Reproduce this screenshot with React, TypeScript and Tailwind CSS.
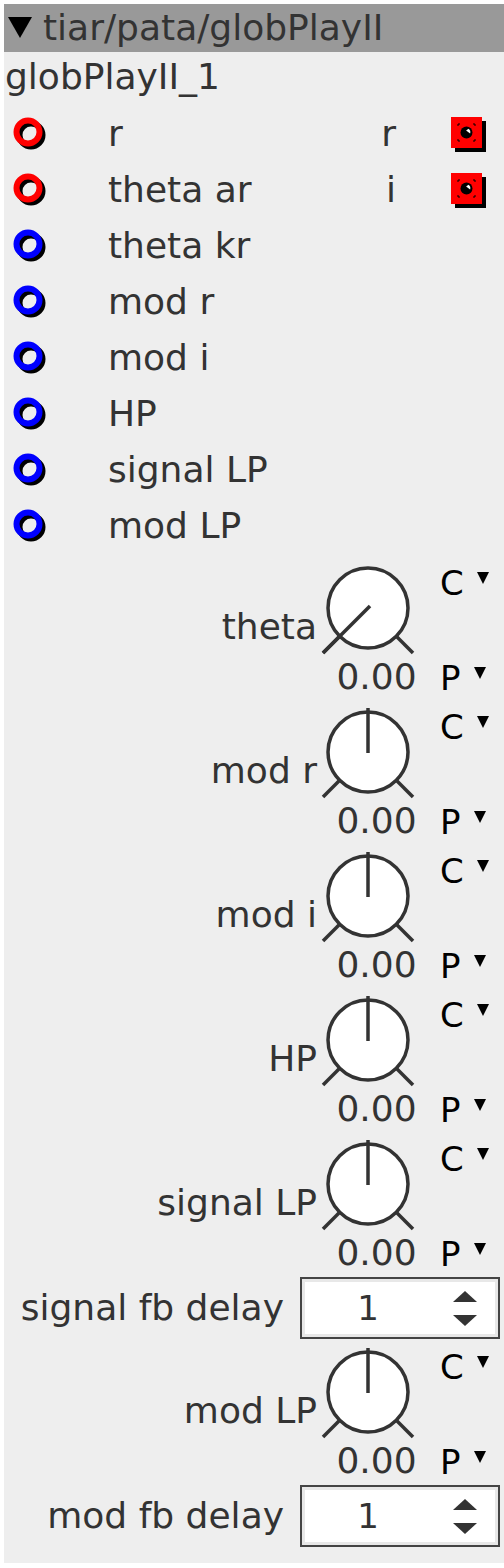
import React from 'react';

const inlets = [
  { label: 'r', color: '#ff0000' },
  { label: 'theta ar', color: '#ff0000' },
  { label: 'theta kr', color: '#0000ff' },
  { label: 'mod r', color: '#0000ff' },
  { label: 'mod i', color: '#0000ff' },
  { label: 'HP', color: '#0000ff' },
  { label: 'signal LP', color: '#0000ff' },
  { label: 'mod LP', color: '#0000ff' },
];

const outlets: Record<number, string> = { 0: 'r', 1: 'i' };

type Item =
  | { kind: 'knob'; label: string; min?: boolean }
  | { kind: 'num'; label: string };

const items: Item[] = [
  { kind: 'knob', label: 'theta', min: true },
  { kind: 'knob', label: 'mod r' },
  { kind: 'knob', label: 'mod i' },
  { kind: 'knob', label: 'HP' },
  { kind: 'knob', label: 'signal LP' },
  { kind: 'num', label: 'signal fb delay' },
  { kind: 'knob', label: 'mod LP' },
  { kind: 'num', label: 'mod fb delay' },
];

const Ring: React.FC<{ color: string }> = ({ color }) => (
  <svg width="40" height="40" viewBox="0 0 40 40">
    <circle cx="19" cy="19" r="11.5" fill="none" stroke="#000" strokeWidth="6" />
    <circle cx="16" cy="16" r="11.5" fill="none" stroke={color} strokeWidth="6" />
  </svg>
);

const OutPort: React.FC = () => (
  <svg width="40" height="40" viewBox="0 0 40 40">
    <rect x="4" y="4" width="31" height="31" fill="#000" />
    <rect x="0" y="0" width="31" height="31" fill="#ff0000" />
    <path d="M7 9V7h2M22 7h2v2M24 22v2h-2M9 24H7v-2" fill="none" stroke="#000" strokeWidth="1" />
    <circle cx="15.5" cy="15.5" r="6" fill="#000" />
    <path d="M17.5 11.8a4 4 0 0 1 1.6 4.6l-4 -3z" fill="#fff" />
  </svg>
);

const Caret: React.FC<{ size?: number }> = ({ size = 12 }) => (
  <svg width={size} height={size} viewBox="0 0 12 12">
    <polygon points="0,0 12,0 6,12" fill="#000" />
  </svg>
);

const Knob: React.FC<{ min?: boolean }> = ({ min }) => (
  <svg width="96" height="96" viewBox="0 0 96 96">
    <circle cx="48" cy="48" r="40" fill="#fff" stroke="#333" strokeWidth="3.5" />
    <line x1="19.7" y1="76.3" x2="3" y2="93" stroke="#333" strokeWidth="3.5" />
    <line x1="76.3" y1="76.3" x2="93" y2="93" stroke="#333" strokeWidth="3.5" />
    {min ? (
      <line x1="50" y1="46" x2="3" y2="93" stroke="#333" strokeWidth="3.5" />
    ) : (
      <line x1="48" y1="49" x2="48" y2="4" stroke="#333" strokeWidth="3.5" />
    )}
  </svg>
);

const KnobRow: React.FC<{ label: string; min?: boolean }> = ({ label, min }) => (
  <div className="flex h-[144px]">
    <div className="w-[316px] shrink-0 pt-[51px] pr-[3px] text-right text-[36px] leading-[40px] text-[#333]">{label}</div>
    <div className="w-[100px] shrink-0 flex flex-col">
      <div className="pt-[4px]"><Knob min={min} /></div>
      <div className="pl-[13px] text-center text-[36px] leading-[40px] text-[#333] mt-[1px]">0.00</div>
    </div>
    <div className="flex-1 pl-[20px] flex flex-col justify-between pt-[7px] pb-[2px] text-[34px] leading-[40px] text-black">
      <div className="flex items-start gap-[13px]"><span>C</span><span className="pt-[9px]"><Caret /></span></div>
      <div className="flex items-start gap-[13px]"><span>P</span><span className="pt-[9px]"><Caret /></span></div>
    </div>
  </div>
);

const NumRow: React.FC<{ label: string }> = ({ label }) => (
  <div className="flex h-[64px] items-start">
    <div className="w-[284px] shrink-0 pt-[12px] pr-[4px] text-right text-[36px] leading-[40px] text-[#333]">{label}</div>
    <div className="ml-[12px] mt-[1px] w-[200px] h-[62px] border-2 border-[#444] bg-white flex">
      <div className="flex-1 border-[3px] border-[#e8e8e8] border-r-0 flex items-center justify-center text-[34px] text-[#333] pr-[3px]">1</div>
      <div className="w-[64px] border-[3px] border-[#e8e8e8] border-l-0 flex flex-col items-center justify-center gap-[13px]">
        <svg width="24" height="11" viewBox="0 0 24 11"><polygon points="12,0 24,11 0,11" fill="#333" /></svg>
        <svg width="24" height="11" viewBox="0 0 24 11"><polygon points="0,0 24,0 12,11" fill="#333" /></svg>
      </div>
    </div>
  </div>
);

const App: React.FC = () => {
  return (
    <div className="w-[504px] min-h-[1568px] bg-white pl-[4px] pt-[4px]" style={{ fontFamily: '"DejaVu Sans", sans-serif' }}>
      <div className="w-[500px] h-[1559px] bg-[#eeeeee]">
        <div className="h-[48px] bg-[#999999] flex items-center pl-[4px] gap-[11px]">
          <svg width="24" height="22" viewBox="0 0 24 22"><polygon points="0,0 24,0 12,21" fill="#000" /></svg>
          <span className="text-[36px] leading-[40px] text-[#333]">tiar/pata/globPlayII</span>
        </div>
        <div className="h-[54px] pl-[1px] pt-[5px] text-[36px] leading-[40px] text-[#333]">globPlayII_1</div>
        {inlets.map((inl, i) => (
          <div key={i} className="flex h-[56px] items-center">
            <div className="w-[104px] pl-[8px] pt-[3px] shrink-0"><Ring color={inl.color} /></div>
            <div className="w-[288px] shrink-0 text-[36px] leading-[40px] text-[#333]">{inl.label}</div>
            {outlets[i] !== undefined && (
              <>
                <div className="w-[0px] flex justify-end text-[36px] leading-[40px] text-[#333]">
                  <span>{outlets[i]}</span>
                </div>
                <div className="ml-[55px] pt-[5px]"><OutPort /></div>
              </>
            )}
          </div>
        ))}
        <div className="pt-[2px]">
          {items.map((it, i) =>
            it.kind === 'knob' ? <KnobRow key={i} label={it.label} min={it.min} /> : <NumRow key={i} label={it.label} />
          )}
        </div>
      </div>
    </div>
  );
};

export default App;
